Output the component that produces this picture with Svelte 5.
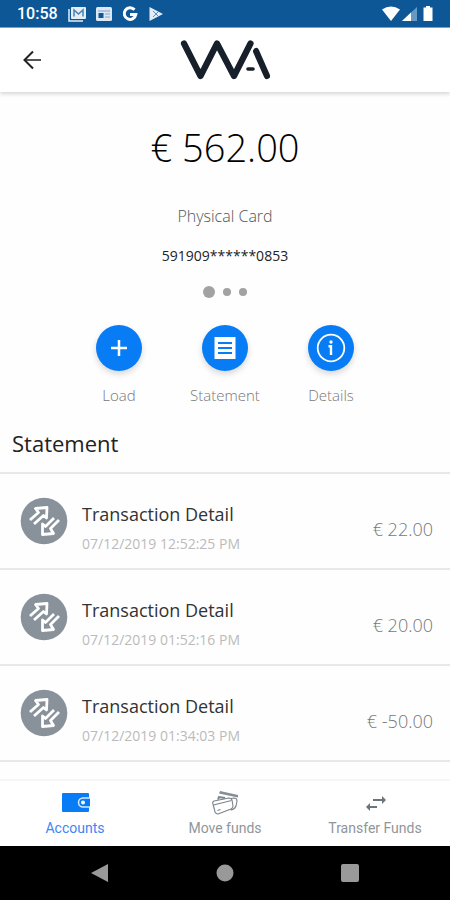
<script>
  const actions = [
    { id: 'load', label: 'Load' },
    { id: 'statement', label: 'Statement' },
    { id: 'details', label: 'Details' }
  ];
  const transactions = [
    { date: '07/12/2019 12:52:25 PM', amount: '€ 22.00' },
    { date: '07/12/2019 01:52:16 PM', amount: '€ 20.00' },
    { date: '07/12/2019 01:34:03 PM', amount: '€ -50.00' }
  ];
  const tabs = [
    { id: 'accounts', label: 'Accounts' },
    { id: 'move', label: 'Move funds' },
    { id: 'transfer', label: 'Transfer Funds' }
  ];
  let active = $state('accounts');
</script>

<div class="screen">
  <div class="status">
    <span class="time">10:58</span>
    <svg width="18" height="16" viewBox="0 0 18 16" aria-hidden="true">
      <path d="M1 3v12h14" fill="none" stroke="#e3edf6" stroke-width="1.5" />
      <rect x="3" y="1" width="15" height="12" rx="1" fill="#e3edf6" />
      <path d="M6 10.500V4l4.500 4L15 4v6.500" fill="none" stroke="#4b80b2" stroke-width="1.500" />
    </svg>
    <svg width="16" height="16" viewBox="0 0 16 16" aria-hidden="true">
      <rect x="0" y="1" width="16" height="14" rx="1.500" fill="#dce8f3" />
      <path d="M2 5h12" stroke="#7fa3c8" />
      <rect x="2.500" y="7" width="5" height="5" fill="#0e5797" />
      <path d="M9 8h5M9 11h5" stroke="#a4bfd9" stroke-width="1.500" />
    </svg>
    <svg width="16" height="16" viewBox="0 0 16 16" aria-hidden="true">
      <path d="M12.500 3.800A5.800 5.800 0 1 0 13.800 8.500H8" fill="none" stroke="#fff" stroke-width="3" />
    </svg>
    <svg width="16" height="16" viewBox="0 0 16 16" aria-hidden="true">
      <path d="M1.500 1 15 8 1.500 15z" fill="#e3edf6" />
      <path d="M5 5l5 5M5 11l5-5" stroke="#5f8fbd" />
    </svg>
    <span class="grow"></span>
    <svg class="signals" width="54" height="18" viewBox="0 0 54 18" aria-hidden="true">
      <path d="M1 4.500Q10-1.500 19 4.500L10 16z" fill="#fff" />
      <path d="M36 2v14H21z" fill="#6899c4" />
      <path d="M30 7.600V16h-9z" fill="#fff" />
      <path d="M45 1h4v1.500h2.500V16h-9V2.500H45z" fill="#fff" />
    </svg>
  </div>

  <header>
    <button class="back" aria-label="Back">
      <svg width="20" height="20" viewBox="0 0 20 20" fill="none" stroke="#222" stroke-width="2">
        <path d="M19 10H2" stroke="#555" />
        <path d="M11 1.500 2.500 10l8.500 8.500" />
      </svg>
    </button>
    <svg class="logo" width="90" height="42" viewBox="0 0 90 42" role="img" aria-label="WA">
      <g fill="none" stroke="#17202a" stroke-width="6.200" stroke-linecap="round" stroke-linejoin="round">
        <path d="M4 4.500 20.500 37 37 4.500 54 37 70.500 4.500" />
        <path d="M76 12 87 37" />
      </g>
      <path d="M71.500 13 76 5" stroke="#fff" stroke-width="1.200" />
      <path d="M68 30h5" stroke="#17202a" stroke-width="3.600" stroke-linecap="round" />
    </svg>
  </header>

  <main>
    <section class="account">
      <div class="balance">€ 562.00</div>
      <div class="kind">Physical Card</div>
      <div class="number">591909******0853</div>
      <div class="dots"><i class="on"></i><i></i><i></i></div>
    </section>

    <div class="actions">
      {#each actions as action}
        <button class="action">
          <span class="disc">
            {#if action.id === 'load'}
              <svg width="18" height="18" viewBox="0 0 18 18"><path d="M9 1v16M1 9h16" stroke="#fff" stroke-width="2.500" /></svg>
            {:else if action.id === 'statement'}
              <svg width="22" height="24" viewBox="0 0 22 24">
                <rect x="0.500" y="1" width="21" height="22" fill="#fff" />
                <path d="M4 7h14M4 12h14M4 17h14" stroke="#087cf5" stroke-width="2" />
              </svg>
            {:else}
              <svg width="30" height="30" viewBox="0 0 30 30">
                <circle cx="15" cy="15" r="13.300" fill="none" stroke="#fff" stroke-width="1.800" />
                <circle cx="15" cy="9" r="1.700" fill="#fff" />
                <path d="M12.500 13.200H15V22" fill="none" stroke="#fff" stroke-width="2.400" />
              </svg>
            {/if}
          </span>
          <span>{action.label}</span>
        </button>
      {/each}
    </div>

    <h2>Statement</h2>
    <ul>
      {#each transactions as item}
        <li>
          <svg class="badge" width="48" height="48" viewBox="0 0 48 48" aria-hidden="true">
            <circle cx="24" cy="24" r="23.300" fill="#89929a" />
            <g fill="none" stroke="#fff" stroke-width="2.800" stroke-linejoin="round">
              <path d="M10 23 18.500 15.500 15.500 11.500 27 10.500 26.500 21 23.500 18.500 14 27" />
              <path d="M39 23 30.500 31.500 33.500 36.500 22.500 37.500 22.500 27 25.500 29.500 34 21" />
            </g>
          </svg>
          <div class="info">
            <div class="title">Transaction Detail</div>
            <div class="date">{item.date}</div>
          </div>
          <div class="amount">{item.amount}</div>
        </li>
      {/each}
    </ul>
  </main>

  <nav class="tabs">
    {#each tabs as tab}
      <button class:active={active === tab.id} onclick={() => (active = tab.id)}>
        <svg width="30" height="26" viewBox="0 0 30 26" aria-hidden="true">
          {#if tab.id === 'accounts'}
            <rect x="2" y="4" width="27" height="19" rx="1" fill="#087cf5" />
            <path d="M30 9h-7a4.500 4.500 0 0 0 0 9h7" fill="#087cf5" stroke="#d5e9ff" stroke-width="1.500" />
            <circle cx="23" cy="13.500" r="2" fill="#fff" />
          {:else if tab.id === 'move'}
            <g fill="#fff" stroke="#7b848a" stroke-width="1.100">
              <path d="M10 2 28 6v2.500L9 4.500z" fill="#858e94" stroke="none" />
              <path d="M8 10.500 9 8l6 1" stroke-width="2" />
              <path d="M12 11 24 9q3 0 3 3l-1 5q-1 3-5 4z" />
              <path d="M3 15q-1-2 1-3l15-3q2 0 3 2l1 6q0 2-2 3L8 25q-2 0-3-2z" />
              <path d="M3.500 16 21.500 11.500M7.500 21.500l3-1" />
            </g>
          {:else}
            <path d="M13 10h9V7l4 4-4 4v-3h-9zM17 19H10v3l-4-4 4-4v3h7z" fill="#6c757c" />
          {/if}
        </svg>
        <span>{tab.label}</span>
      </button>
    {/each}
  </nav>

  <div class="system">
    <button aria-label="System back"><svg width="20" height="20" viewBox="0 0 20 20"><path d="M1 10 18 1v18z" fill="#999" /></svg></button>
    <button aria-label="Home"><svg width="20" height="20" viewBox="0 0 20 20"><circle cx="10" cy="10" r="8.500" fill="#999" /></svg></button>
    <button aria-label="Recent apps"><svg width="20" height="20" viewBox="0 0 20 20"><rect x="1" y="1" width="18" height="18" rx="2" fill="#999" /></svg></button>
  </div>
</div>

<style>
  :global(body) { margin: 0; }
  .screen {
    min-height: 100vh;
    display: flex;
    flex-direction: column;
    background: #fefefe;
    color: #222;
    font-family: "Open Sans", "Noto Sans", sans-serif;
    font-weight: 300;
  }
  button { border: 0; padding: 0; background: none; font: inherit; color: inherit; cursor: pointer; }
  svg { display: block; flex: none; }
  .status {
    box-sizing: border-box;
    height: 28px;
    padding: 0 15px 0 17px;
    display: flex;
    align-items: center;
    gap: 10px;
    background: #0e5797;
    border-bottom: 1px solid #7fa4c7;
    color: #fff;
  }
  .time { font: 500 16px/20px Roboto, sans-serif; }
  .grow { flex: 1; }
  header {
    height: 64px;
    display: grid;
    grid-template-columns: 1fr auto 1fr;
    align-items: center;
    background: #fff;
    box-shadow: 0 2px 4px rgba(0, 0, 0, 0.16);
  }
  .back { justify-self: start; margin-left: 22px; }
  main { flex: 1; }
  .account {
    padding-top: 27px;
    display: flex;
    flex-direction: column;
    align-items: center;
  }
  .balance { font-size: 38px; line-height: 56px; font-weight: 350; color: #000; }
  .kind { margin-top: 29px; font-size: 16px; line-height: 24px; color: #555; }
  .number { margin-top: 16px; font-size: 14px; line-height: 24px; font-weight: 400; }
  .dots { height: 12px; margin-top: 18px; display: flex; align-items: center; gap: 8px; }
  .dots i { width: 8px; height: 8px; border-radius: 50%; background: #a2a2a2; }
  .dots .on { width: 12px; height: 12px; }
  .actions {
    max-width: 318px;
    margin: 27px auto 0;
    display: grid;
    grid-template-columns: repeat(3, 1fr);
  }
  .action {
    display: flex;
    flex-direction: column;
    align-items: center;
    gap: 12px;
    font-size: 15px;
    line-height: 24px;
    color: #777;
  }
  .disc {
    width: 46px;
    height: 46px;
    border-radius: 50%;
    display: grid;
    place-items: center;
    background: #087cf5;
    box-shadow: 0 3px 6px rgba(0, 0, 0, 0.16);
  }
  h2 { margin: 20px 12px 13px; font-size: 22px; line-height: 32px; font-weight: 400; }
  ul { margin: 0; padding: 0; list-style: none; border-top: 2px solid #e8e8e8; }
  li {
    min-height: 94px;
    padding: 0 17px 0 20px;
    display: flex;
    align-items: center;
    border-bottom: 2px solid #e8e8e8;
  }
  .info { flex: 1; margin: 16px 0 0 14px; }
  .title { font-size: 18px; line-height: 30px; font-weight: 400; color: #333; }
  .date { font-size: 14px; line-height: 30px; font-weight: 400; color: #bbb; }
  .amount { margin-top: 16px; font-size: 18px; line-height: 24px; color: #777; }
  .tabs {
    box-sizing: border-box;
    height: 67px;
    display: grid;
    grid-template-columns: repeat(3, 1fr);
    background: #fff;
    border-top: 2px solid #f6f6f6;
  }
  .tabs button {
    display: flex;
    flex-direction: column;
    align-items: center;
    justify-content: center;
    gap: 2px;
    font: 400 14px/22px Roboto, sans-serif;
    color: #90969a;
  }
  .tabs .active { color: #3d86f5; }
  .system {
    height: 54px;
    padding: 0 38px;
    display: grid;
    grid-template-columns: repeat(3, 1fr);
    place-items: center;
    background: #000;
  }
</style>
